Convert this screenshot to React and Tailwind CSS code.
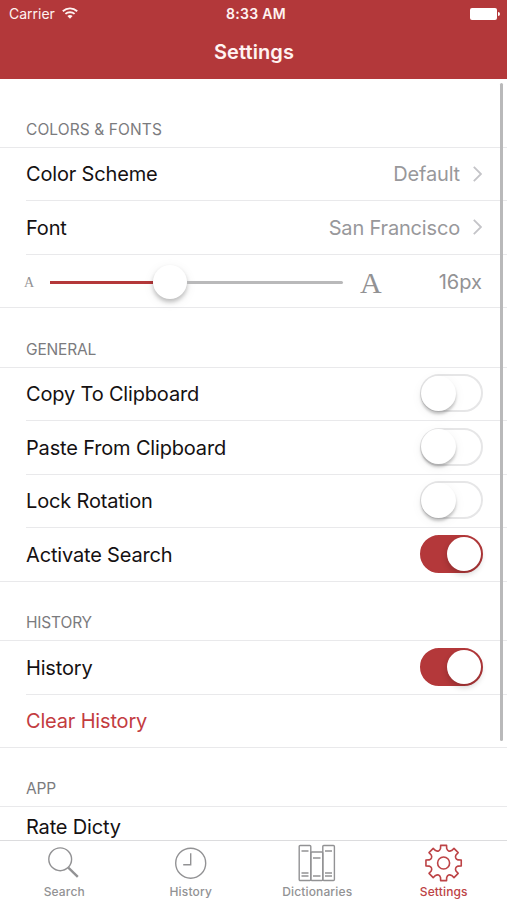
import React, { useState } from "react";

const GearIcon = () => {
  const point = (radius, degrees) => {
    const angle = (degrees * Math.PI) / 180;
    return `${(19.6 + radius * Math.sin(angle)).toFixed(2)} ${(20 - radius * Math.cos(angle)).toFixed(2)}`;
  };

  const teeth = [0, 45, 90, 135, 180, 225, 270, 315]
    .map(
      (a) =>
        `${a === 0 ? "M" : "L"}${point(14.8, a - 12)} L${point(17.9, a - 9.5)} L${point(17.9, a + 9.5)} L${point(14.8, a + 12)} Q${point(11.6, a + 22.5)} ${point(14.8, a + 33)}`
    )
    .join(" ");

  return (
    <svg width="40" height="40" viewBox="0 0 40 40" fill="none" stroke="currentColor" strokeWidth="1.6" strokeLinejoin="round">
      <path d={`${teeth} Z`} />
      <circle cx="19.6" cy="20" r="6" />
    </svg>
  );
};

const SearchIcon = () => (
  <svg width="40" height="40" viewBox="0 0 40 40" fill="none" stroke="currentColor" strokeWidth="1.4">
    <circle cx="16.2" cy="16.3" r="11.4" />
    <path d="M24.3 24.6L33.8 33.8" strokeWidth="2.4" />
  </svg>
);

const ClockIcon = () => (
  <svg width="40" height="40" viewBox="0 0 40 40" fill="none" stroke="currentColor" strokeWidth="1.4">
    <circle cx="19.7" cy="20.2" r="15" />
    <path d="M19.7 10.2V21.7H12.2" />
  </svg>
);

const BooksIcon = () => (
  <svg width="40" height="40" viewBox="0 0 40 40" fill="none" stroke="currentColor" strokeWidth="1.4">
    <rect x="2.2" y="2.5" width="11.6" height="35" rx="1" />
    <rect x="13.8" y="9" width="12" height="28.5" rx="1" />
    <rect x="25.8" y="2.5" width="11.6" height="35" rx="1" />
    <path d="M4.5 8H11.5M4.5 30H11.5M4.5 33H11.5M16 15H23.5M16 33H23.5M28 8H35M28 30H35M28 33H35" />
  </svg>
);

const WifiIcon = () => (
  <svg width="16" height="13" viewBox="0 0 16 13" fill="none" stroke="currentColor" strokeWidth="1.9">
    <path d="M0.8 4.2C5 0.4 11 0.4 15.2 4.2" />
    <path d="M3.4 6.9C6 4.6 10 4.6 12.6 6.9" />
    <path d="M5.4 8.9C7 7.6 9 7.6 10.6 8.9L8 11.7Z" fill="currentColor" stroke="none" />
  </svg>
);

const SectionTitle = ({ children, className }) => (
  <div className={`flex items-end border-b border-[#e9e9eb] pl-[26px] pb-[7px] text-[15.5px] leading-5 text-[#7b7b7e] ${className}`}>
    {children}
  </div>
);

const Row = ({ label, height, last, danger, children }) => (
  <div className={last ? "border-b border-[#e9e9eb]" : "pl-[26px]"}>
    <div className={`flex items-center justify-between pr-6 ${height} ${last ? "pl-[26px]" : "border-b border-[#e9e9eb]"}`}>
      <span className={danger ? "text-[#c33c3f]" : "text-[#151112]"}>{label}</span>
      {children}
    </div>
  </div>
);

const Value = ({ children }) => (
  <div className="flex items-center gap-[13px] pr-px text-[#98989b]">
    <span>{children}</span>
    <svg width="9" height="16" viewBox="0 0 9 16" fill="none" stroke="#c4c4c8" strokeWidth="1.8" className="mb-px">
      <path d="M0.8 0.8L8 8L0.8 15.2" />
    </svg>
  </div>
);

const Toggle = ({ initial }) => {
  const [on, setOn] = useState(initial);

  return (
    <button
      onClick={() => setOn(!on)}
      className={`mb-[2px] flex h-[38px] w-[63px] items-center rounded-full border-2 ${
        on ? "justify-end border-[#b4383a] bg-[#b4383a]" : "justify-start border-[#e6e6e7] bg-white"
      }`}
    >
      <span
        className={
          on
            ? "size-[34px] rounded-full bg-white shadow-[0_3px_6px_rgba(0,0,0,0.2)]"
            : "-ml-px size-[35px] shrink-0 rounded-full bg-white shadow-[0_3px_3px_rgba(0,0,0,0.22),0_3px_12px_rgba(0,0,0,0.06)]"
        }
      />
    </button>
  );
};

const Tab = ({ label, icon, active }) => (
  <button className={`flex w-[126.5px] flex-col items-center pt-[2px] ${active ? "text-[#bd4346]" : "text-[#929294]"}`}>
    {icon}
    <span className="mt-px text-[12px] leading-4 font-medium tracking-[0.15px]">{label}</span>
  </button>
);

const App = () => {
  return (
    <div className="flex h-[900px] w-[507px] flex-col overflow-hidden bg-white font-['Inter','Liberation_Sans',sans-serif]">
      <header className="h-[79px] shrink-0 bg-[#b3383a] text-[#fff3f1]">
        <div className="grid h-[27px] grid-cols-3 items-center pl-[9px] pr-[7px] text-[14px]">
          <div className="flex items-center gap-[7px]">
            <span>Carrier</span>
            <WifiIcon />
          </div>
          <span className="pl-[3px] text-center font-semibold tracking-[0.3px]">8:33 AM</span>
          <div className="flex items-center justify-end gap-px">
            <span className="h-3 w-[27px] rounded-[2px] bg-white" />
            <span className="h-1 w-[2px] rounded-r-full bg-white" />
          </div>
        </div>
        <h1 className="pl-px text-center text-[20px] leading-[51px] font-semibold tracking-[0.1px]">Settings</h1>
      </header>

      <main className="flex min-h-0 flex-1">
        <div className="relative w-full overflow-hidden text-[20px] tracking-[-0.17px]">
          <SectionTitle className="h-[69px] tracking-[0.1px]">COLORS &amp; FONTS</SectionTitle>
          <Row label="Color Scheme" height="h-[53px]">
            <Value>Default</Value>
          </Row>
          <Row label="Font" height="h-[54px]">
            <Value>San Francisco</Value>
          </Row>
          <div className="flex h-[53px] items-center border-b border-[#e9e9eb] pt-[2px] pl-6 pr-[25px] text-[#929294]">
            <span className="w-[26px] font-['Liberation_Serif',serif] text-[14px]">A</span>
            <div className="flex w-[293px] items-center">
              <span className="h-[3px] w-[103px] bg-[#b4383a]" />
              <span className="size-[34px] rounded-full bg-white shadow-[0_3px_4px_rgba(0,0,0,0.22),0_3px_12px_rgba(0,0,0,0.08)]" />
              <span className="h-[3px] flex-1 rounded-r-full bg-[#b9b9ba]" />
            </div>
            <span className="ml-[17px] font-['Liberation_Serif',serif] text-[30px]">A</span>
            <span className="ml-auto tracking-normal">16px</span>
          </div>

          <SectionTitle className="h-[60px]">GENERAL</SectionTitle>
          <Row label="Copy To Clipboard" height="h-[53px]">
            <Toggle initial={false} />
          </Row>
          <Row label="Paste From Clipboard" height="h-[54px]">
            <Toggle initial={false} />
          </Row>
          <Row label="Lock Rotation" height="h-[53px]">
            <Toggle initial={false} />
          </Row>
          <Row label="Activate Search" height="h-[53px]" last>
            <Toggle initial={true} />
          </Row>

          <SectionTitle className="h-[59px]">HISTORY</SectionTitle>
          <Row label="History" height="h-[54px]">
            <Toggle initial={true} />
          </Row>
          <Row label="Clear History" height="h-[52px]" last danger />

          <SectionTitle className="h-[59px]">APP</SectionTitle>
          <Row label="Rate Dicty" height="h-[40px]" />

          <div className="absolute top-[4px] right-[4px] h-[658px] w-[3px] rounded-full bg-[#b9b9ba]" />
        </div>
      </main>

      <nav className="flex h-[60px] shrink-0 border-t border-[#dcdcde] bg-white pl-px">
        <Tab label="Search" icon={<SearchIcon />} />
        <Tab label="History" icon={<ClockIcon />} />
        <Tab label="Dictionaries" icon={<BooksIcon />} />
        <Tab label="Settings" icon={<GearIcon />} active />
      </nav>
    </div>
  );
};

export default App;
